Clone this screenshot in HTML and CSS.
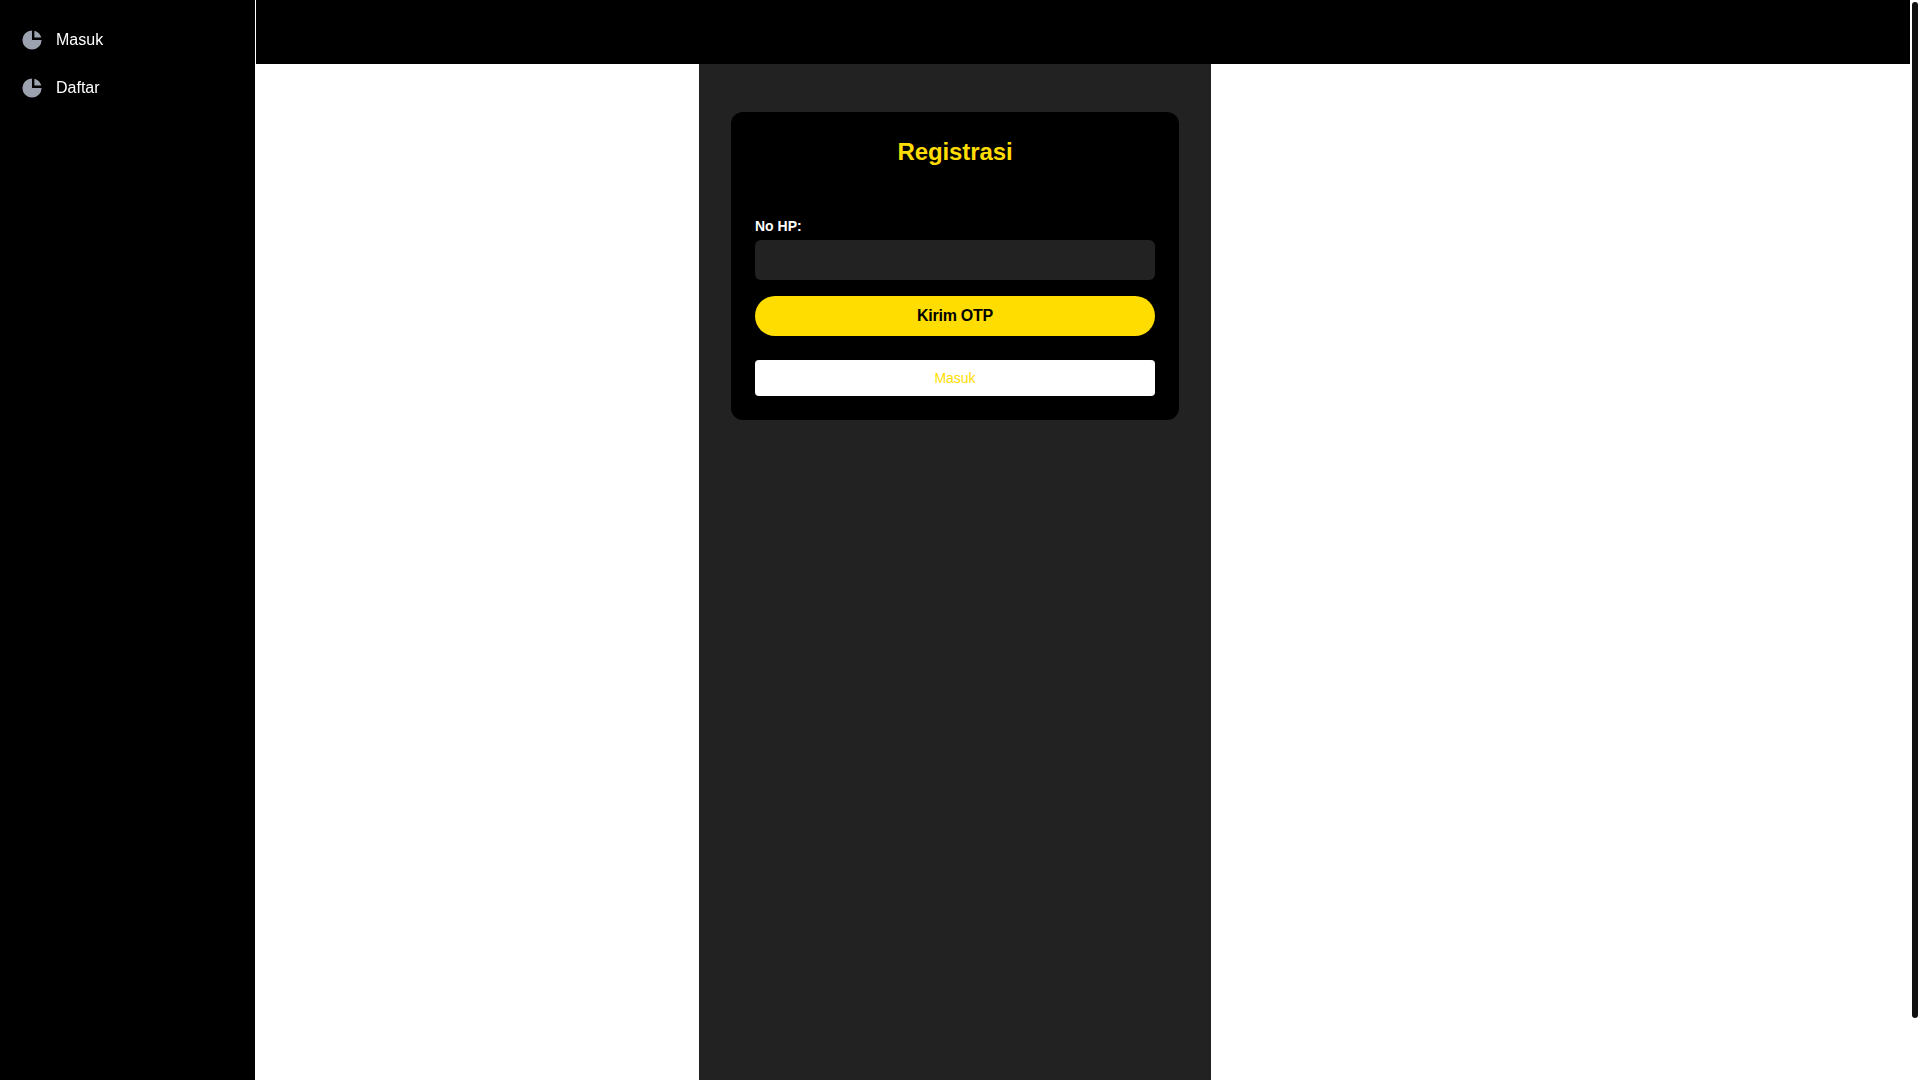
FILE: index.html
```html
<!DOCTYPE html>
<html lang="id">
<head>
<meta charset="utf-8">
<title>Registrasi</title>
<link rel="stylesheet" href="styles.css">
</head>
<body>
<div class="page">
  <header class="topbar"></header>
  <main class="column">
    <form class="card">
      <h1 class="card-title">Registrasi</h1>
      <label class="field-label" for="phone">No HP:</label>
      <input class="field-input" id="phone" type="text">
      <button class="btn-otp" type="button">Kirim OTP</button>
      <a class="btn-login" href="#">Masuk</a>
    </form>
  </main>
</div>
<div class="scrollbar"><div class="scrollbar-thumb"></div></div>
<aside class="sidebar">
  <nav class="side-menu">
    <a class="side-link" href="#">
      <svg class="side-icon" viewBox="0 0 20 20" fill="currentColor"><path d="M2 10a8 8 0 018-8v8h8a8 8 0 11-16 0z"/><path d="M12 2.252A8.014 8.014 0 0117.748 8H12V2.252z"/></svg>
      <span>Masuk</span>
    </a>
    <a class="side-link" href="#">
      <svg class="side-icon" viewBox="0 0 20 20" fill="currentColor"><path d="M2 10a8 8 0 018-8v8h8a8 8 0 11-16 0z"/><path d="M12 2.252A8.014 8.014 0 0117.748 8H12V2.252z"/></svg>
      <span>Daftar</span>
    </a>
  </nav>
</aside>
</body>
</html>
```
FILE: styles.css
```css
* {
  box-sizing: border-box;
}

html {
  height: 100%;
  background: #fff;
}

body {
  display: flex;
  height: 100%;
  margin: 0;
  overflow: hidden;
  font-family: "Liberation Sans", Arial, sans-serif;
  font-size: 16px;
  line-height: 24px;
  color: #fff;
}

.page {
  display: flex;
  flex: 1;
  flex-direction: column;
  min-width: 0;
}

.scrollbar {
  flex: none;
  width: 10px;
  padding: 2px;
  background: #fff;
}

.scrollbar-thumb {
  height: 1016px;
  background: #111;
  border-radius: 3px;
}

.sidebar {
  position: fixed;
  top: 0;
  left: 0;
  bottom: 0;
  z-index: 2;
  width: 256px;
  padding: 20px;
  background: #000;
  border-right: 1px solid #fff;
  will-change: transform;
}

.side-menu {
  display: flex;
  flex-direction: column;
  gap: 8px;
}

.side-link {
  display: flex;
  align-items: center;
  gap: 12px;
  height: 40px;
  color: #fff;
  text-decoration: none;
}

.side-icon {
  width: 24px;
  height: 24px;
  color: #9ca3af;
  flex: none;
}

.topbar {
  flex: none;
  height: 64px;
  background: #000;
}

.column {
  flex: 1;
  width: 512px;
  margin: 0 auto;
  padding: 48px 32px;
  background: #222;
}

.card {
  display: flex;
  flex-direction: column;
  padding: 24px;
  background: #000;
  border-radius: 12px;
}

.card-title {
  margin: 0 0 48px;
  font-size: 24px;
  line-height: 32px;
  font-weight: 700;
  letter-spacing: -0.1px;
  text-align: center;
  color: #ffdd00;
}

.field-label {
  margin-bottom: 4px;
  font-size: 14px;
  line-height: 20px;
  font-weight: 700;
  color: #fff;
}

.field-input {
  height: 40px;
  padding: 8px 12px;
  background: #222;
  border: 0;
  border-radius: 6px;
  color: #fff;
  font: inherit;
}

.btn-otp {
  height: 40px;
  margin-top: 16px;
  background: #ffdd00;
  border: 0;
  border-radius: 20px;
  color: #000;
  font-family: inherit;
  font-size: 16px;
  font-weight: 700;
  letter-spacing: -0.25px;
}

.btn-login {
  height: 36px;
  margin-top: 24px;
  background: #fff;
  border-radius: 4px;
  color: #ffdd00;
  font-size: 14px;
  line-height: 36px;
  text-align: center;
  text-decoration: none;
}
```
